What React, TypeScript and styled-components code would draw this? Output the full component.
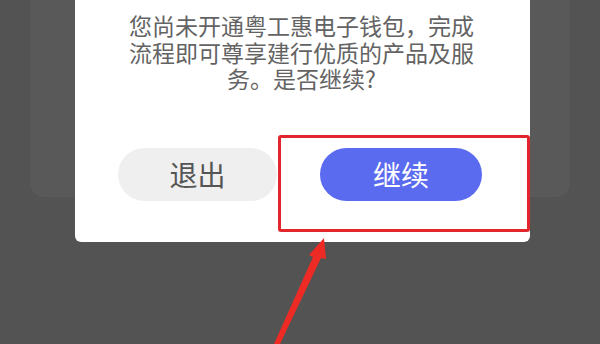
import React from "react";
import styled, { createGlobalStyle } from "styled-components";

const GlobalStyle = createGlobalStyle`
  html, body { margin: 0; padding: 0; background: #535353; }
  body { font-family: "Noto Sans CJK SC", "Noto Sans", sans-serif; }
`;

const Page = styled.div`
  position: relative;
  width: 600px;
  height: 344px;
  overflow: hidden;
  background: #535353;
`;

const UnderCard = styled.div`
  margin: 0 30px;
  height: 197px;
  background: #595959;
  border-radius: 0 0 14px 14px;
`;

const Dialog = styled.div`
  position: absolute;
  top: 0;
  left: 75px;
  width: 455px;
  height: 242px;
  background: #ffffff;
  border-radius: 0 0 6px 6px;
  display: flex;
  flex-direction: column;
  align-items: center;
`;

const Message = styled.p`
  margin: 12px 0 0 -2px;
  width: 348px;
  font-size: 23px;
  line-height: 26.5px;
  color: #636363;
  text-align: center;
`;

const ButtonRow = styled.div`
  margin-top: 56px;
  display: flex;
  gap: 43px;
  padding-right: 5px;
`;

const PillButton = styled.button<{ $primary?: boolean }>`
  width: ${(p) => (p.$primary ? "162px" : "159px")};
  height: 53px;
  border: none;
  border-radius: 27px;
  font-family: "Noto Sans CJK SC", sans-serif;
  font-size: 28px;
  line-height: 53px;
  padding: 0;
  background: ${(p) => (p.$primary ? "#5b6bef" : "#efefef")};
  color: ${(p) => (p.$primary ? "#ffffff" : "#555555")};
`;

const HighlightBox = styled.div`
  position: absolute;
  left: 278px;
  top: 135px;
  width: 252px;
  height: 97px;
  box-sizing: border-box;
  border: 3px solid #e3262b;
  border-radius: 3px;
`;

const ArrowLayer = styled.svg`
  position: absolute;
  left: 0;
  top: 0;
  pointer-events: none;
`;

export default function App() {
  return (
    <>
      <GlobalStyle />
      <Page>
        <UnderCard />
        <Dialog>
          <Message>您尚未开通粤工惠电子钱包，完成流程即可尊享建行优质的产品及服务。是否继续?</Message>
          <ButtonRow>
            <PillButton>退出</PillButton>
            <PillButton $primary>继续</PillButton>
          </ButtonRow>
        </Dialog>
        <HighlightBox />
        <ArrowLayer width="600" height="344" viewBox="0 0 600 344">
          <polygon
            points="274,344 313,257 309,255 324,238 326,259 321,258 280,344"
            fill="#ee2a24"
          />
        </ArrowLayer>
      </Page>
    </>
  );
}
